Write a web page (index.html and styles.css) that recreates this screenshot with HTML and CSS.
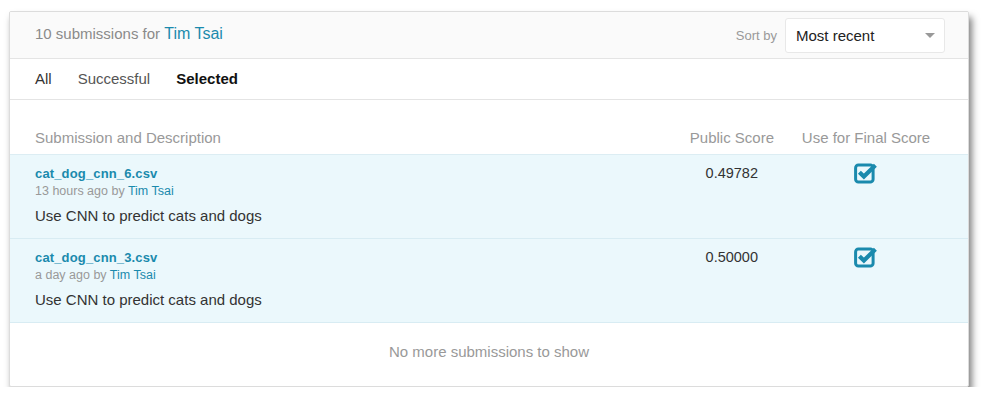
FILE: index.html
```html
<!DOCTYPE html>
<html>
<head>
<meta charset="utf-8">
<link rel="stylesheet" href="styles.css">
</head>
<body>
<div class="card">
  <div class="header">
    <div class="title">10 submissions for <a class="link name">Tim Tsai</a></div>
    <div class="sort">
      <span class="sort-label">Sort by</span>
      <div class="select"><span>Most recent</span><span class="caret"></span></div>
    </div>
  </div>
  <div class="tabs">
    <span class="tab">All</span>
    <span class="tab">Successful</span>
    <span class="tab active">Selected</span>
  </div>
  <div class="thead">
    <div class="col-desc">Submission and Description</div>
    <div class="col-score">Public Score</div>
    <div class="col-final">Use for Final Score</div>
  </div>
  <div class="row">
    <div class="col-desc">
      <div class="file">cat_dog_cnn_6.csv</div>
      <div class="meta">13 hours ago by <span class="link">Tim Tsai</span></div>
      <div class="desc">Use CNN to predict cats and dogs</div>
    </div>
    <div class="col-score score">0.49782</div>
    <div class="col-final">
      <svg class="check" width="24" height="22" viewBox="0 0 24 22"><rect x="1.6" y="3.1" width="17.5" height="17" rx="2.8" fill="none" stroke="#1a8aad" stroke-width="3"/><path d="M5.4 10.2 L9.9 14.6 L21.4 3.2" fill="none" stroke="#1a8aad" stroke-width="4.2" stroke-linejoin="miter"/></svg>
    </div>
  </div>
  <div class="row">
    <div class="col-desc">
      <div class="file">cat_dog_cnn_3.csv</div>
      <div class="meta">a day ago by <span class="link">Tim Tsai</span></div>
      <div class="desc">Use CNN to predict cats and dogs</div>
    </div>
    <div class="col-score score">0.50000</div>
    <div class="col-final">
      <svg class="check" width="24" height="22" viewBox="0 0 24 22"><rect x="1.6" y="3.1" width="17.5" height="17" rx="2.8" fill="none" stroke="#1a8aad" stroke-width="3"/><path d="M5.4 10.2 L9.9 14.6 L21.4 3.2" fill="none" stroke="#1a8aad" stroke-width="4.2" stroke-linejoin="miter"/></svg>
    </div>
  </div>
  <div class="footer">No more submissions to show</div>
</div>
</body>
</html>
```
FILE: styles.css
```css
* { box-sizing: border-box; }
body {
  margin: 0;
  background: #fff;
  font-family: "Liberation Sans", Arial, sans-serif;
  color: #333;
}
.card {
  margin: 11px 0 0 9px;
  width: 960px;
  height: 376px;
  border: 1px solid #dcdcdc;
  border-radius: 2px;
  background: #fff;
  box-shadow: 3px 6px 7px rgba(0,0,0,0.5);
  overflow: hidden;
}
.header {
  height: 47px;
  background: #fafafa;
  border-bottom: 1px solid #e4e4e4;
  display: flex;
  align-items: center;
  justify-content: space-between;
  padding: 0 23px 2px 25px;
}
.title { font-size: 15px; color: #8a8a8a; }
.link { color: #1a8aad; }
.name { font-size: 16px; }
.sort { display: flex; align-items: center; padding-top: 2px; }
.sort-label { font-size: 13px; color: #999; margin-right: 8px; }
.select {
  width: 160px;
  height: 35px;
  border: 1px solid #e8e8e8;
  border-radius: 3px;
  background: #fff;
  display: flex;
  align-items: center;
  justify-content: space-between;
  padding: 0 9px 0 10px;
  font-size: 15px;
  color: #222;
}
.caret {
  width: 0; height: 0;
  border-left: 5px solid transparent;
  border-right: 5px solid transparent;
  border-top: 5px solid #999;
}
.tabs {
  height: 41px;
  border-bottom: 1px solid #e4e4e4;
  display: flex;
  align-items: center;
  padding: 0 0 1px 25px;
  gap: 26px;
  font-size: 15px;
  color: #555;
}
.tab:first-child { color: #333; }
.tab.active { font-weight: bold; color: #111; }
.thead {
  height: 55px;
  display: flex;
  align-items: flex-end;
  padding: 0 0 8px 25px;
  border-bottom: 1px solid #dcedf3;
  font-size: 15px;
  color: #999;
}
.col-desc { flex: 1; }
.col-score { width: 140px; text-align: right; }
.col-final { width: 194px; text-align: center; padding-right: 10px; }
.row {
  height: 84px;
  background: #ebf8fc;
  border-bottom: 1px solid #d8ecf3;
  display: flex;
  padding: 10px 0 0 25px;
}
.file { font-size: 13px; font-weight: bold; color: #1a8aad; line-height: 17px; letter-spacing: 0.15px; }
.meta { font-size: 12.5px; color: #999; line-height: 15px; margin-top: 2px; }
.desc { font-size: 15px; color: #333; line-height: 18px; margin-top: 8px; }
.score { font-size: 14.5px; color: #333; padding-right: 16px; line-height: 17px; }
.check { display: inline-block; margin-top: -3px; margin-left: 0; }
.footer {
  height: 63px;
  display: flex;
  align-items: center;
  justify-content: center;
  font-size: 15px;
  color: #999;
  padding-bottom: 6px;
}
```
